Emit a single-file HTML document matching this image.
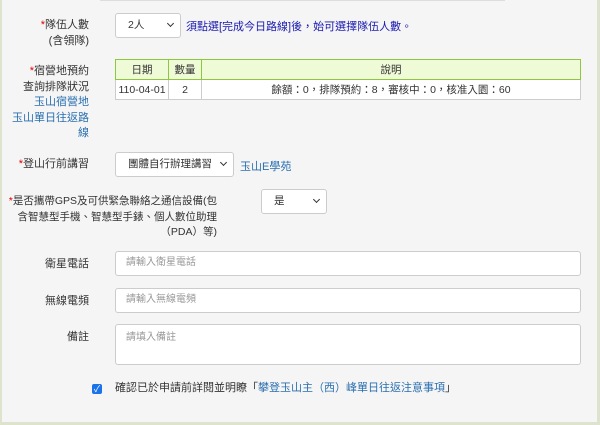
<!DOCTYPE html><html><head><meta charset="utf-8"><style>
*{box-sizing:border-box;margin:0;padding:0}
body{width:600px;height:425px;background:#fff;font-family:"Liberation Sans","Noto Sans CJK TC",sans-serif;font-size:11px;color:#333;position:relative;overflow:hidden}
.wrap{position:absolute;left:0;top:0;width:600px;height:425px;background:#f5f5f5}
.bl{position:absolute;background:#dde3cc}
.a{position:absolute;white-space:nowrap}
.lbl{position:absolute;text-align:right;line-height:15.5px;white-space:nowrap}
.r{color:#d00}
.lnk{color:#2a6fb0}
.sel{position:absolute;background:#fff;border:1px solid #ccc;border-radius:3px;padding-left:12px;line-height:22px;font-size:10.5px;white-space:nowrap}
.sel:after{content:"";position:absolute;right:7px;top:7px;width:4px;height:4px;border-right:1.5px solid #333;border-bottom:1.5px solid #333;transform:rotate(45deg)}
.inp{position:absolute;left:115px;width:466px;background:#fff;border:1px solid #ccc;border-radius:3px;padding-left:10px;color:#999;font-size:10px;line-height:22px}
table{position:absolute;left:115px;top:59px;width:466px;border-collapse:collapse;background:#fff;table-layout:fixed}
td,th{border:1px solid #ccc;text-align:center;height:20px;font-weight:normal;font-size:10.5px;white-space:nowrap;overflow:hidden}
th{background:#effad6;border-color:#8dc63f}
</style></head><body><div class="wrap">
<div class="bl" style="left:0;top:0;width:2px;height:425px"></div>
<div class="bl" style="right:0;top:0;width:3px;height:425px"></div>
<div class="bl" style="left:0;bottom:0;width:600px;height:3px"></div>
<div class="a" style="left:100px;top:0;width:405px;height:1px;background:#ddd"></div>
<div class="lbl" style="right:511px;top:18px"><span class="r">*</span>隊伍人數<br>(含領隊)</div>
<div class="sel" style="left:115px;top:13px;width:66px;height:25px">2人</div>
<div class="a" style="left:186px;top:18px;color:#1a1ab0">須點選[完成今日路線]後，始可選擇隊伍人數。</div>
<div class="lbl" style="right:511px;top:64px"><span class="r">*</span>宿營地預約<br>查詢排隊狀況<br><span class="lnk">玉山宿營地<br>玉山單日往返路<br>線</span></div>
<table><tr><th style="width:53px">日期</th><th style="width:33px">數量</th><th>說明</th></tr>
<tr><td>110-04-01</td><td>2</td><td>餘額：0，排隊預約：8，審核中：0，核准入園：60</td></tr></table>
<div class="lbl" style="right:511px;top:157px"><span class="r">*</span>登山行前講習</div>
<div class="sel" style="left:115px;top:152px;width:119px;height:25px">團體自行辦理講習</div>
<div class="a lnk" style="left:240px;top:158px">玉山E學苑</div>
<div class="lbl" style="right:383px;top:194px;font-size:10.5px"><span class="r">*</span>是否攜帶GPS及可供緊急聯絡之通信設備(包<br>含智慧型手機、智慧型手錶、個人數位助理<br>（PDA）等)</div>
<div class="sel" style="left:261px;top:189px;width:66px;height:25px">是</div>
<div class="lbl" style="right:511px;top:257px">衛星電話</div>
<div class="inp" style="top:251px;height:25px">請輸入衛星電話</div>
<div class="lbl" style="right:511px;top:294px">無線電頻</div>
<div class="inp" style="top:288px;height:25px">請輸入無線電頻</div>
<div class="lbl" style="right:511px;top:330px">備註</div>
<div class="inp" style="top:324px;height:41px;line-height:26px">請填入備註</div>
<div class="a" style="left:92px;top:384px;width:10px;height:10px;background:#1a73e8;border-radius:2px;color:#fff;font-size:9px;line-height:10px;text-align:center">✓</div>
<div class="a" style="left:115px;top:379px">確認已於申請前詳閱並明瞭「<span class="lnk">攀登玉山主（西）峰單日往返注意事項</span>」</div>
</div>
</body></html>
